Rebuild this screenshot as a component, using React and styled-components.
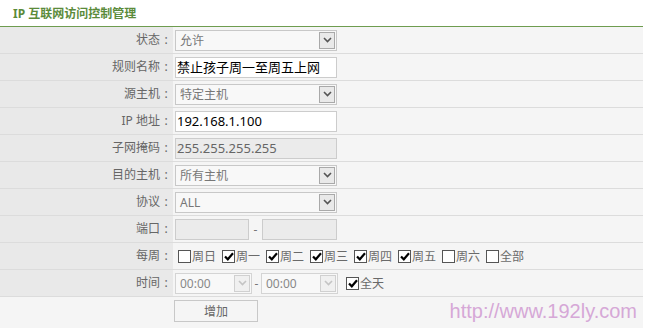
import React from "react";
import styled, { createGlobalStyle } from "styled-components";

const Global = createGlobalStyle`
  html, body { margin: 0; padding: 0; background: #fff; }
  body { font-family: "Noto Sans", "Noto Sans CJK SC", sans-serif; }
`;

const Page = styled.div`
  position: relative;
  width: 643px;
  height: 328px;
  overflow: hidden;
`;

const Title = styled.div`
  height: 26px;
  line-height: 27px;
  padding-left: 13px;
  border-bottom: 1px solid #6e9c4f;
  font-family: "Noto Sans", "Noto Sans CJK SC", sans-serif;
  font-weight: bold;
  font-size: 12px;
  color: #5b8b3b;
`;

const Row = styled.div`
  display: grid;
  grid-template-columns: 173px 1fr;
  height: ${(p) => (p.$tall ? "31px" : "26px")};
  border-bottom: ${(p) => (p.$tall ? "none" : "1px solid #dcdcdc")};
  background: #f5f5f5;
`;

const Label = styled.div`
  background: ${(p) => (p.$plain ? "transparent" : "#e9e9e9")};
  display: flex;
  justify-content: flex-end;
  padding-right: 1px;
  line-height: 26px;
  font-size: 12px;
  color: #666;
  font-family: "Noto Sans", "Noto Sans CJK SC", sans-serif;
`;

const Colon = styled.span`
  display: inline-block;
  width: 12px;
  text-align: center;
`;

const Cell = styled.div`
  display: flex;
  align-items: ${(p) => (p.$top ? "flex-start" : "center")};
  padding-left: ${(p) => p.$pl || "2px"};
  padding-top: ${(p) => (p.$top ? "3px" : "0")};
`;

const SelectBox = styled.div`
  box-sizing: border-box;
  width: ${(p) => p.$w || "162px"};
  height: 21px;
  border: 1px solid ${(p) => (p.$disabled ? "#d4d4d4" : "#c8c8c8")};
  background: #f8f8f8;
  display: flex;
  align-items: center;
  justify-content: space-between;
  padding-left: 4px;
  font-size: 12px;
  color: ${(p) => (p.$disabled ? "#888" : "#777")};
`;

const Arrow = styled.div`
  box-sizing: border-box;
  width: 16px;
  height: 17px;
  margin-right: 1px;
  border: 1px solid ${(p) => (p.$disabled ? "#d0d0d0" : "#a9a9a9")};
  background: ${(p) => (p.$disabled ? "#f0f0f0" : "#e9e9e9")};
  display: flex;
  align-items: center;
  justify-content: center;
`;

const TextInput = styled.div`
  box-sizing: border-box;
  width: ${(p) => p.$w || "162px"};
  height: 21px;
  border: 1px solid #cccccc;
  background: ${(p) => (p.$disabled ? "#ebebeb" : "#fff")};
  color: ${(p) => (p.$disabled ? "#666" : "#000")};
  font-size: 13px;
  line-height: 19px;
  padding-left: 1px;
  white-space: nowrap;
`;

const Dash = styled.span`
  font-size: 12px;
  color: #777;
  width: ${(p) => p.$w || "13px"};
  text-align: center;
`;

const Week = styled.div`
  display: flex;
  align-items: center;
  gap: 6px;
  margin-left: ${(p) => p.$ml || "3px"};
`;

const Check = styled.label`
  display: flex;
  align-items: center;
  gap: 1px;
  font-size: 12px;
  color: #6a6a6a;
`;

const Box = styled.span`
  box-sizing: border-box;
  width: 13px;
  height: 13px;
  border: 1px solid #555;
  background: #fff;
  display: inline-flex;
  align-items: center;
  justify-content: center;
`;

const Button = styled.div`
  box-sizing: border-box;
  width: 84px;
  height: 22px;
  border: 1px solid #c8c8c8;
  background: #f5f5f5;
  color: #666;
  font-size: 12px;
  display: flex;
  align-items: center;
  justify-content: center;
`;

const Watermark = styled.div`
  position: absolute;
  right: 6px;
  bottom: 5px;
  font-family: "Liberation Sans", Arial, sans-serif;
  font-size: 20px;
  color: #d6a8d7;
`;

const Chevron = ({ disabled }) => (
  <svg width="9" height="6" viewBox="0 0 9 6">
    <path
      d="M1 1 L4.5 4.5 L8 1"
      fill="none"
      stroke={disabled ? "#c4c4c4" : "#555"}
      strokeWidth="1.6"
    />
  </svg>
);

const Select = ({ value, w, disabled }) => (
  <SelectBox $w={w} $disabled={disabled}>
    <span>{value}</span>
    <Arrow $disabled={disabled}>
      <Chevron disabled={disabled} />
    </Arrow>
  </SelectBox>
);

const CheckBox = ({ checked, text }) => (
  <Check>
    <Box>
      {checked && (
        <svg width="10" height="9" viewBox="0 0 10 9">
          <path d="M1 4.5 L3.8 7.3 L9 1.2" fill="none" stroke="#000" strokeWidth="2.2" />
        </svg>
      )}
    </Box>
    <span>{text}</span>
  </Check>
);

const FieldLabel = ({ children }) => (
  <Label>
    <span>{children}</span>
    <Colon>:</Colon>
  </Label>
);

const days = [
  ["周日", false],
  ["周一", true],
  ["周二", true],
  ["周三", true],
  ["周四", true],
  ["周五", true],
  ["周六", false],
  ["全部", false],
];

export default function App() {
  return (
    <Page>
      <Global />
      <Title>IP 互联网访问控制管理</Title>
      <Row>
        <FieldLabel>状态</FieldLabel>
        <Cell><Select value="允许" /></Cell>
      </Row>
      <Row>
        <FieldLabel>规则名称</FieldLabel>
        <Cell><TextInput>禁止孩子周一至周五上网</TextInput></Cell>
      </Row>
      <Row>
        <FieldLabel>源主机</FieldLabel>
        <Cell><Select value="特定主机" /></Cell>
      </Row>
      <Row>
        <FieldLabel>IP 地址</FieldLabel>
        <Cell><TextInput>192.168.1.100</TextInput></Cell>
      </Row>
      <Row>
        <FieldLabel>子网掩码</FieldLabel>
        <Cell><TextInput $disabled>255.255.255.255</TextInput></Cell>
      </Row>
      <Row>
        <FieldLabel>目的主机</FieldLabel>
        <Cell><Select value="所有主机" /></Cell>
      </Row>
      <Row>
        <FieldLabel>协议</FieldLabel>
        <Cell><Select value="ALL" /></Cell>
      </Row>
      <Row>
        <FieldLabel>端口</FieldLabel>
        <Cell>
          <TextInput $w="74px" $disabled />
          <Dash>-</Dash>
          <TextInput $w="75px" $disabled />
        </Cell>
      </Row>
      <Row>
        <FieldLabel>每周</FieldLabel>
        <Cell>
          <Week>
            {days.map(([t, c]) => (
              <CheckBox key={t} text={t} checked={c} />
            ))}
          </Week>
        </Cell>
      </Row>
      <Row>
        <FieldLabel>时间</FieldLabel>
        <Cell>
          <Select value="00:00" w="77px" disabled />
          <Dash $w="9px">-</Dash>
          <Select value="00:00" w="77px" disabled />
          <Week $ml="8px">
            <CheckBox text="全天" checked />
          </Week>
        </Cell>
      </Row>
      <Row $tall>
        <Label $plain />
        <Cell $top $pl="1px"><Button>增加</Button></Cell>
      </Row>
      <Watermark>http://www.192ly.com</Watermark>
    </Page>
  );
}
